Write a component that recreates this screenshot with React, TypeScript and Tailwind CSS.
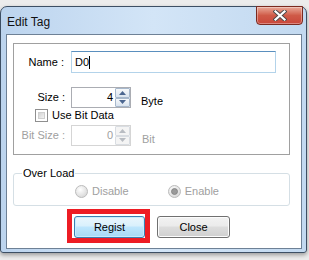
import React from 'react';

const UI = { fontFamily: '"Liberation Sans", Arial, sans-serif' };

const Arrow = ({ up, disabled }: { up?: boolean; disabled?: boolean }) => (
    <svg width="7" height="4" viewBox="0 0 7 4">
        <path
            d={up ? 'M0 4 L3.5 0 L7 4 Z' : 'M0 0 L3.5 4 L7 0 Z'}
            fill={disabled ? '#b8bcc2' : '#4b6690'}
        />
    </svg>
);

const Spin = ({ value, disabled }: { value: string; disabled?: boolean }) => (
    <div
        className={`w-[60px] h-[21px] border bg-white flex items-center ${
            disabled ? 'border-[#d5d5d5] text-[#a0a0a0]' : 'border-[#abadb3] text-black'
        }`}
    >
        <span className="flex-1 text-right pr-[2px] leading-[13px]">{value}</span>
        <div className="flex flex-col w-[15px] h-[19px]">
            {[true, false].map((up) => (
                <div
                    key={String(up)}
                    className={`flex-1 flex items-center justify-center border rounded-[1px] ${
                        disabled
                            ? 'border-[#d9dde2] bg-[#f4f4f4]'
                            : 'border-[#a7b8cc] bg-gradient-to-b from-[#f7f9fb] to-[#d9e3ee]'
                    }`}
                >
                    <Arrow up={up} disabled={disabled} />
                </div>
            ))}
        </div>
    </div>
);

const Radio = ({ checked }: { checked?: boolean }) => (
    <svg width="13" height="13" viewBox="0 0 13 13">
        <defs>
            <radialGradient id={checked ? 'rc' : 'ru'} cx="40%" cy="35%" r="70%">
                <stop offset="0" stopColor="#ffffff" />
                <stop offset="1" stopColor="#d6d6d6" />
            </radialGradient>
        </defs>
        <circle cx="6.5" cy="6.5" r="6" fill={`url(#${checked ? 'rc' : 'ru'})`} stroke="#bcbcbc" />
        {checked && <circle cx="6.5" cy="6.5" r="3" fill="#9a9a9a" stroke="#7d7d7d" strokeWidth="0.8" />}
    </svg>
);

export default function App() {
    return (
        <div className="w-[309px] h-[260px] overflow-hidden bg-[#ececec] pt-[6px]" style={UI}>
            <div className="w-[307px] h-[247px] rounded-t-[7px] rounded-b-[3px] border border-[#3d4f64] bg-gradient-to-r from-[#bcd4ee] via-[#d3e5f7] to-[#c2d9f0] flex flex-col shadow-[0_2px_4px_rgba(0,0,0,0.35)]">
                {/* title bar */}
                <div className="h-[27px] flex items-start">
                    <span className="pl-[6px] pt-[8px] text-[12px] leading-[14px] text-[#111]">Edit Tag</span>
                    <div className="ml-auto mr-[3px] w-[47px] h-[19px] -mt-[1px] rounded-b-[4px] border border-[#7a2a20] bg-gradient-to-b from-[#e8a999] via-[#cf5a47] to-[#c9463a] flex items-center justify-center shadow-[inset_0_0_0_1px_rgba(255,255,255,0.35)]">
                        <svg width="14" height="11" viewBox="0 0 14 11">
                            <path d="M2.5 1.5 L11.5 9.5 M11.5 1.5 L2.5 9.5" stroke="#4a4a4a" strokeWidth="4" strokeLinecap="square" />
                            <path d="M2.5 1.5 L11.5 9.5 M11.5 1.5 L2.5 9.5" stroke="#ffffff" strokeWidth="2.2" strokeLinecap="square" />
                        </svg>
                    </div>
                </div>

                {/* client area */}
                <div className="ml-[5px] mr-[4px] mb-[3px] flex-1 border border-[#6e8196] bg-white text-[11px] text-black">
                    <div className="ml-[6px] mt-[8px] w-[277px] h-[112px] border border-[#a0a0a0] pt-[7px]">
                        <div className="flex items-center h-[22px]">
                            <span className="w-[50px] text-right leading-[13px]">Name :</span>
                            <div className="ml-[7px] w-[205px] h-[22px] border border-[#b3d3ea] border-t-[#5a8fbe] flex items-center pl-[3px]">
                                <span className="leading-[13px]">D0</span>
                                <span className="w-[1px] h-[13px] bg-black" />
                            </div>
                        </div>
                        <div className="flex items-center h-[21px] mt-[14px]">
                            <span className="w-[51px] text-right leading-[13px]">Size :</span>
                            <div className="ml-[6px]">
                                <Spin value="4" />
                            </div>
                            <span className="ml-[10px] self-end leading-[13px]">Byte</span>
                        </div>
                        <div className="flex items-center h-[13px] mt-[1px] ml-[21px]">
                            <div className="w-[13px] h-[13px] border border-[#8f8f8f] bg-white p-[2px]">
                                <div className="w-full h-full bg-gradient-to-br from-[#d4d4d4] to-[#f2f2f2] border border-[#cfcfcf]" />
                            </div>
                            <span className="ml-[4px] leading-[13px]">Use Bit Data</span>
                        </div>
                        <div className="flex items-center h-[21px] mt-[3px] text-[#a0a0a0]">
                            <span className="w-[51px] text-right leading-[13px]">Bit Size :</span>
                            <div className="ml-[6px]">
                                <Spin value="0" disabled />
                            </div>
                            <span className="ml-[11px] self-end leading-[13px]">Bit</span>
                        </div>
                    </div>

                    <fieldset className="ml-[6px] mt-[12px] w-[277px] h-[39px] border border-[#d5dfe5] rounded-[3px]">
                        <legend className="ml-[8px] px-[1px] leading-[13px]">Over Load</legend>
                        <div className="flex items-center h-[13px] mt-[5px] text-[#a0a0a0]">
                            <span className="ml-[61px] flex">
                                <Radio />
                            </span>
                            <span className="ml-[4px] leading-[13px]">Disable</span>
                            <span className="ml-[39px] flex">
                                <Radio checked />
                            </span>
                            <span className="ml-[4px] leading-[13px]">Enable</span>
                        </div>
                    </fieldset>

                    <div className="flex mt-[10px] ml-[67px]">
                        <div className="relative">
                            <button className="w-[71px] h-[22px] rounded-[3px] border border-[#3c7fb1] bg-[linear-gradient(#eaf6fd_0%,#d9f0fc_45%,#bee6fd_50%,#a7d9f5_100%)] shadow-[inset_0_0_0_1px_#c7ecfe] leading-[13px]">
                                Regist
                            </button>
                            <div className="absolute -left-[7px] -right-[5px] -top-[7px] -bottom-[5px] border-[5px] border-[#ed1c24]" />
                        </div>
                        <button className="ml-[12px] w-[73px] h-[22px] rounded-[3px] border border-[#707070] bg-[linear-gradient(#f2f2f2_0%,#ebebeb_45%,#dddddd_50%,#cfcfcf_100%)] shadow-[inset_0_0_0_1px_#fcfcfc] leading-[13px]">
                            Close
                        </button>
                    </div>
                </div>
            </div>
        </div>
    );
}
